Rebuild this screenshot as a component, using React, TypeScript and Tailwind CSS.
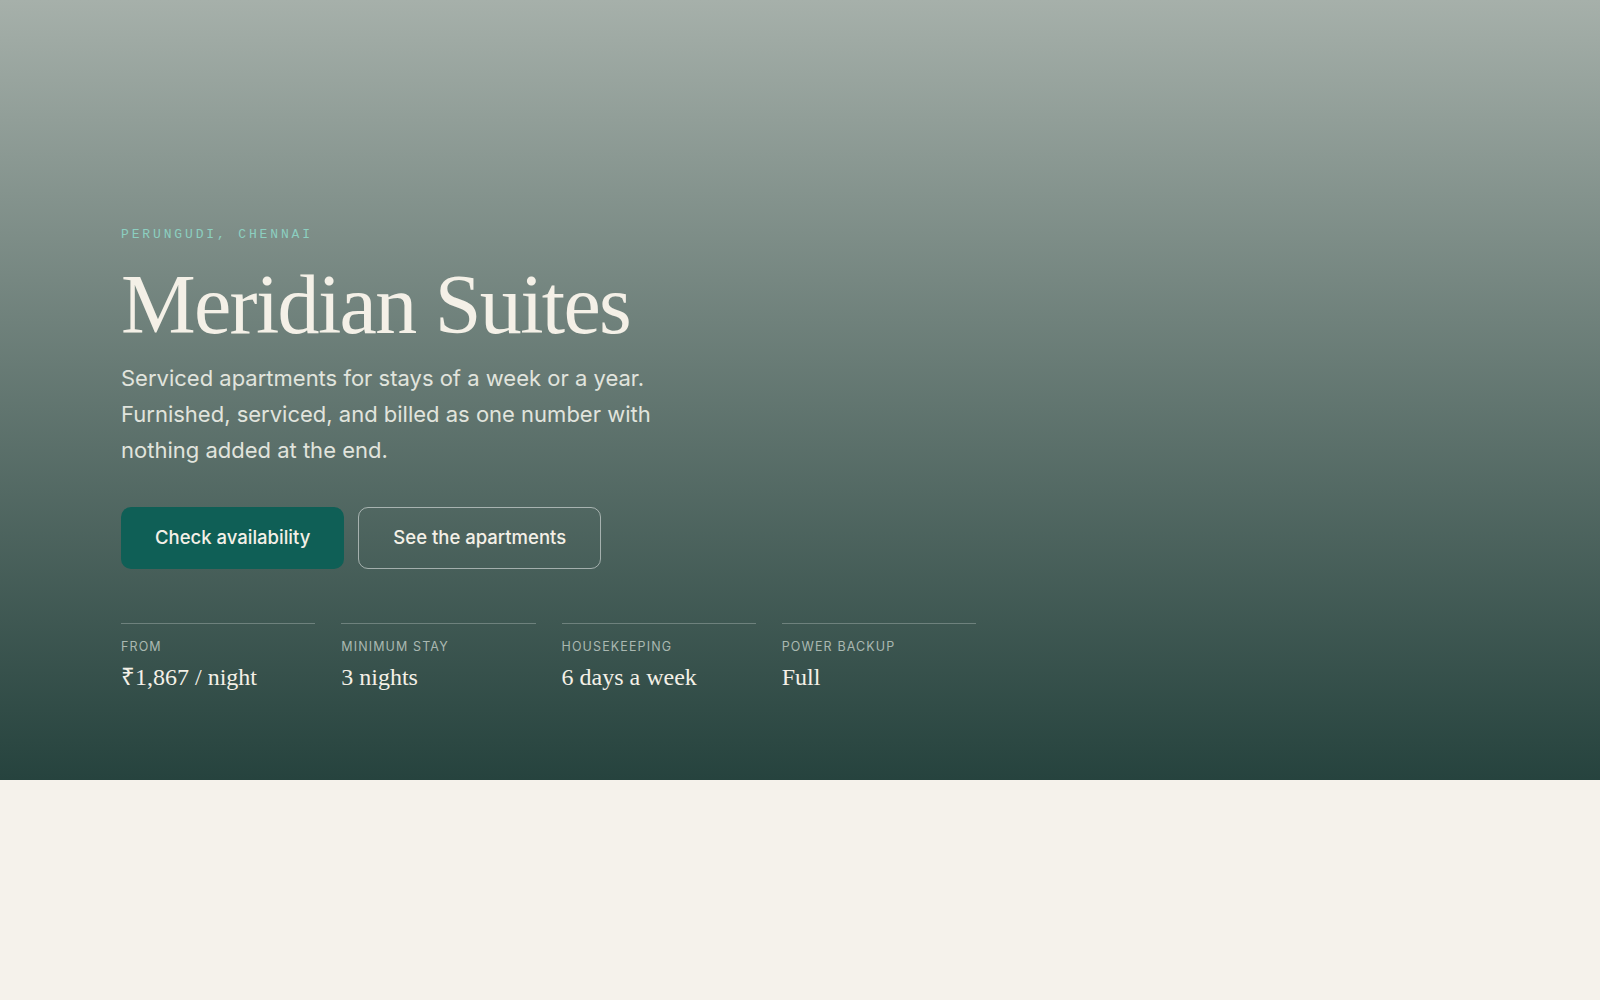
const stats = [
  { label: 'From', value: '₹1,867 / night' },
  { label: 'Minimum stay', value: '3 nights' },
  { label: 'Housekeeping', value: '6 days a week' },
  { label: 'Power backup', value: 'Full' },
];

export default function App() {
  return (
    <div className="min-h-screen bg-[#f5f2eb]" style={{ fontFamily: 'Inter, "Noto Sans", sans-serif' }}>
      <section className="h-[780px] bg-gradient-to-b from-[#a6b0aa] to-[#26433e] px-[121px] pt-[225px]">
        <p className="font-['Liberation_Mono',monospace] text-[13px] leading-5 uppercase tracking-[0.22em] text-[#8ccfc0]">
          Perungudi, Chennai
        </p>
        <h1 className="mt-[12px] font-['Liberation_Serif',serif] text-[84px] leading-[96px] tracking-[-0.02em] text-[#f4f0e7]">
          Meridian Suites
        </h1>
        <p className="mt-[7px] max-w-[560px] text-[22px] leading-[36px] text-[#e1e4dd]">
          Serviced apartments for stays of a week or a year. Furnished, serviced, and billed as one number with
          nothing added at the end.
        </p>
        <div className="mt-[39px] flex gap-[14px]">
          <button className="h-[62px] rounded-[10px] bg-[#0f5f56] px-[34px] text-[18.5px] font-medium text-[#f4f0e7]">
            Check availability
          </button>
          <button className="h-[62px] rounded-[10px] border border-white/50 px-[34px] text-[18.5px] font-medium text-[#f4f0e7]">
            See the apartments
          </button>
        </div>
        <div className="mt-[54px] grid w-[855px] grid-cols-4 gap-x-[26px]">
          {stats.map((s) => (
            <div key={s.label} className="border-t border-white/25 pt-[15px]">
              <p className="text-[12.5px] leading-4 uppercase tracking-[0.09em] text-[#aab8b1]">{s.label}</p>
              <p className="mt-[6px] font-['Liberation_Serif',serif] text-[24px] leading-8 text-[#f4f0e7]">{s.value}</p>
            </div>
          ))}
        </div>
      </section>
    </div>
  );
}
